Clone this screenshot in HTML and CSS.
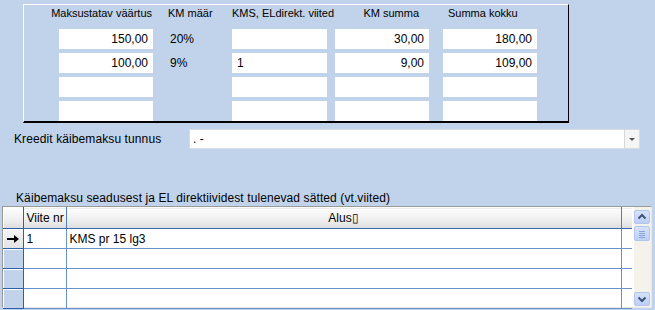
FILE: index.html
```html
<!DOCTYPE html>
<html lang="et">
<head>
    <meta charset="UTF-8">
    <title>Käibemaks</title>
    <link rel="stylesheet" href="styles.css">
</head>
<body>
    <div class="panel">
        <div class="vat-grid">
            <div class="head h-value">Maksustatav väärtus</div>
            <div class="head h-rate">KM määr</div>
            <div class="head h-refs">KMS, ELdirekt. viited</div>
            <div class="head h-sum">KM summa</div>
            <div class="head h-total">Summa kokku</div>

            <div class="field num">150,00</div>
            <div class="rate">20%</div>
            <div class="field"></div>
            <div class="field num right">30,00</div>
            <div class="field num right">180,00</div>

            <div class="field num">100,00</div>
            <div class="rate">9%</div>
            <div class="field">1</div>
            <div class="field num right">9,00</div>
            <div class="field num right">109,00</div>

            <div class="field"></div>
            <div class="rate"></div>
            <div class="field"></div>
            <div class="field right"></div>
            <div class="field right"></div>

            <div class="field"></div>
            <div class="rate"></div>
            <div class="field"></div>
            <div class="field right"></div>
            <div class="field right"></div>
        </div>
    </div>

    <div class="combo-row">
        <label class="combo-label">Kreedit käibemaksu tunnus</label>
        <div class="combo">
            <span class="combo-value">. -</span>
            <span class="combo-btn"><span class="tri"></span></span>
        </div>
    </div>

    <div class="section-label">Käibemaksu seadusest ja EL direktiividest tulenevad sätted (vt.viited)</div>

    <div class="grid">
        <table class="refs">
            <colgroup>
                <col class="c-ind">
                <col class="c-nr">
                <col class="c-alus">
                <col class="c-pad">
            </colgroup>
            <thead>
                <tr>
                    <th class="ind"></th>
                    <th class="left">Viite nr</th>
                    <th>Alus▯</th>
                    <th class="pad"></th>
                </tr>
            </thead>
            <tbody>
                <tr>
                    <td class="ind current">
                        <svg width="14" height="10" viewBox="0 0 14 10">
                            <rect x="1" y="4" width="9" height="2" fill="#000"/>
                            <polygon points="8,1 13,5 8,9" fill="#000"/>
                        </svg>
                    </td>
                    <td>1</td>
                    <td>KMS pr 15 lg3</td>
                    <td class="pad"></td>
                </tr>
                <tr><td class="ind"></td><td></td><td></td><td class="pad"></td></tr>
                <tr><td class="ind"></td><td></td><td></td><td class="pad"></td></tr>
                <tr><td class="ind"></td><td></td><td></td><td class="pad"></td></tr>
            </tbody>
        </table>
        <div class="scrollbar">
            <div class="sb-btn">
                <svg width="14" height="12" viewBox="0 0 14 12"><polyline points="3.5,7.5 7,4 10.5,7.5" fill="none" stroke="#3e5277" stroke-width="2"/></svg>
            </div>
            <div class="sb-thumb">
                <svg width="14" height="12" viewBox="0 0 14 12">
                    <line x1="4" y1="3.5" x2="10" y2="3.5" stroke="#8aa4d8"/>
                    <line x1="4" y1="5.5" x2="10" y2="5.5" stroke="#8aa4d8"/>
                    <line x1="4" y1="7.5" x2="10" y2="7.5" stroke="#8aa4d8"/>
                    <line x1="4" y1="9.5" x2="10" y2="9.5" stroke="#8aa4d8"/>
                </svg>
            </div>
            <div class="sb-track"></div>
            <div class="sb-btn">
                <svg width="14" height="12" viewBox="0 0 14 12"><polyline points="3.5,4.5 7,8 10.5,4.5" fill="none" stroke="#3e5277" stroke-width="2"/></svg>
            </div>
        </div>
    </div>
</body>
</html>
```

FILE: styles.css
```css
body {
    margin: 0;
    padding: 4px 0 0;
    width: 655px;
    height: 310px;
    overflow: hidden;
    background: #c1d3ea;
    font-family: "Liberation Sans", Arial, sans-serif;
    font-size: 12px;
    color: #000;
}
.panel {
    margin-left: 23px;
    width: 546px;
    height: 119px;
    box-sizing: border-box;
    border-top: 1px solid #fff;
    border-left: 1px solid #fff;
    border-right: 1px solid #000;
    border-bottom: 2px solid #000;
    padding-left: 35px;
}
.vat-grid {
    display: grid;
    grid-template-columns: 94px 79px 95px 102px 108px;
    grid-template-rows: 20px repeat(4, 20px);
    row-gap: 4px;
}
.head {
    font-size: 11px;
    white-space: nowrap;
    padding-top: 2px;
}
.h-value {
    justify-self: end;
    margin-right: 1px;
}
.h-rate {
    padding-left: 15px;
}
.h-sum {
    justify-self: end;
    margin-right: 10px;
}
.h-total {
    padding-left: 19px;
}
.field {
    width: 94px;
    height: 20px;
    box-sizing: border-box;
    background: #fff;
    line-height: 20px;
    padding: 0 5px;
    white-space: nowrap;
}
.field.num {
    text-align: right;
}
.field.right {
    justify-self: end;
}
.vat-grid > .field:nth-child(5n+3) {
    width: 95px;
}
.rate {
    line-height: 20px;
    padding-left: 17px;
}
.combo-row {
    display: flex;
    align-items: center;
    margin-top: 6px;
    height: 20px;
}
.combo-label {
    width: 175px;
    padding-left: 14px;
    letter-spacing: 0.1px;
}
.combo {
    display: flex;
    width: 451px;
    height: 20px;
    box-sizing: border-box;
    background: #fff;
    border: 1px solid #d6dce4;
}
.combo-value {
    flex: 1;
    line-height: 18px;
    padding-left: 3px;
}
.combo-btn {
    width: 14px;
    border-left: 1px solid #d8d8d8;
    background: #f5f5f5;
    display: flex;
    align-items: center;
    justify-content: center;
}
.tri {
    width: 0;
    height: 0;
    border-left: 3px solid transparent;
    border-right: 3px solid transparent;
    border-top: 3px solid #555;
}
.section-label {
    margin-top: 42px;
    padding-left: 16px;
    height: 15px;
    line-height: 14px;
    letter-spacing: 0.1px;
}
.grid {
    display: flex;
    margin-left: 2px;
    width: 650px;
    height: 102px;
    box-sizing: border-box;
    border-top: 1px solid #9c9a94;
    border-left: 1px solid #9c9a94;
    border-right: 1px solid #e8e8e8;
    border-bottom: 1px solid #e8e8e8;
    background: #fff;
}
.refs {
    border-collapse: collapse;
    table-layout: fixed;
    width: 629px;
    height: 20px;
}
.c-ind { width: 20px; }
.c-nr { width: 43px; }
.c-alus { width: 555px; }
.c-pad { width: 11px; }
.refs th {
    height: 20px;
    padding: 0;
    font-weight: normal;
    background: linear-gradient(#fdfdfd, #ebebeb 70%, #dcdcdc);
    border-right: 1px solid #4f7fc0;
    border-bottom: 1px solid #3c6bae;
    border-top: 1px solid #fff;
    text-align: center;
}
.refs th.left {
    text-align: left;
    padding-left: 3px;
}
.refs th.pad {
    border-right: none;
}
.refs td {
    height: 19px;
    padding: 0 0 0 3px;
    border-right: 1px solid #6a93cc;
    border-bottom: 1px solid #6a93cc;
    white-space: nowrap;
}
.refs td.pad {
    border-right: none;
}
.refs .ind {
    padding: 0;
    background: #c1d3ea;
    border-right: 1px solid #2f5fa6;
    border-bottom: 1px solid #2f5fa6;
    box-shadow: inset 1px 1px 0 #fff;
}
.refs th.ind {
    background: linear-gradient(#fdfdfd, #ebebeb 70%, #dcdcdc);
}
.refs td.current {
    background: linear-gradient(#f4f4f4, #e2e2e2);
    text-align: center;
    line-height: 0;
}
.scrollbar {
    display: flex;
    flex-direction: column;
    width: 17px;
    margin-left: 2px;
    padding-top: 3px;
    background: #f4f2ea;
}
.sb-btn, .sb-thumb {
    width: 16px;
    height: 14px;
    box-sizing: border-box;
    border: 1px solid #b2c6ee;
    border-radius: 2px;
    background: linear-gradient(#d6e2fb, #bccff6);
    display: flex;
    align-items: center;
    justify-content: center;
}
.sb-thumb {
    height: 15px;
    margin-top: 2px;
}
.sb-track {
    flex: 1;
}
.sb-btn:last-child {
    margin-bottom: 1px;
}
```
